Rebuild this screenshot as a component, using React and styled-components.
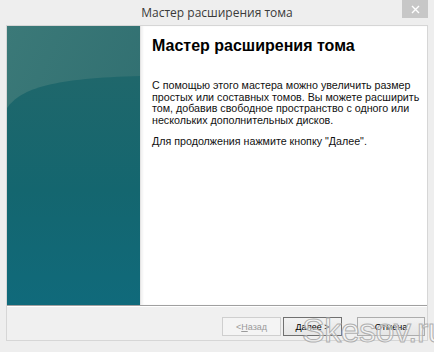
import React from 'react';
import styled, { createGlobalStyle } from 'styled-components';

const Global = createGlobalStyle`
	html, body {
		margin: 0;
		padding: 0;
		overflow: hidden;
		background: #efefef;
	}
`

const Window = styled.div`
	position: relative;
	width: 434px;
	height: 352px;
	display: flex;
	flex-direction: column;
	background-color: #eeeeee;
	box-sizing: border-box;
	overflow: hidden;
	font-family: "Liberation Sans", Arial, sans-serif;
`

const TitleBar = styled.div`
	height: 25px;
	display: grid;
	grid-template-columns: 1fr auto 1fr;
	align-items: start;
	.title {
		grid-column: 2;
		font-family: "Open Sans", "Noto Sans", sans-serif;
		font-size: 12px;
		line-height: 26px;
		color: #3a3a3a;
	}
`

const CloseButton = styled.div`
	grid-column: 3;
	justify-self: end;
	margin-right: 6px;
	width: 26px;
	height: 18px;
	background-color: #c7c7c7;
	color: #fff;
	display: flex;
	align-items: center;
	justify-content: center;
`

const Frame = styled.div`
	flex: 1;
	margin: 0 6px 11px 6px;
	border: 1px solid #d6d6d6;
	display: flex;
	flex-direction: column;
	background-color: #f0f0f0;
`

const Main = styled.div`
	height: 279px;
	display: flex;
`

const SidePanel = styled.div`
	width: 133px;
	height: 100%;
	svg {
		display: block;
	}
`

const Page = styled.div`
	flex: 1;
	min-width: 0;
	background-color: #fff;
	border-left: 1px solid #e3e3e3;
	box-shadow: inset 2px 0 2px rgba(0,0,0,0.05);
	padding: 10px 4px 0 11px;
	color: #111;
	h1 {
		margin: 0 0 24px 0;
		font-family: "Liberation Sans", Arial, sans-serif;
		font-weight: bold;
		font-size: 16px;
		line-height: 20px;
		color: #000;
	}
	p {
		margin: 0 0 9px 0;
		font-size: 10.7px;
		line-height: 11.7px;
		white-space: nowrap;
	}
`

const Separator = styled.div`
	border-top: 1px solid #a0a0a0;
	border-bottom: 1px solid #ffffff;
`

const ButtonBar = styled.div`
	flex: 1;
	display: flex;
	justify-content: flex-end;
	align-items: flex-start;
	padding: 10px 2px 0 0;
`

const Button = styled.div`
	box-sizing: border-box;
	width: ${p => p.w}px;
	height: 19px;
	margin-left: ${p => p.gap}px;
	display: flex;
	align-items: center;
	justify-content: center;
	font-size: 9px;
	border: 1px solid ${p => p.disabled ? '#cfcfcf' : p.primary ? '#707070' : '#adadad'};
	background: ${p => p.disabled ? '#f4f4f4' : 'linear-gradient(#f2f2f2, #e6e6e6)'};
	color: ${p => p.disabled ? '#9a9a9a' : '#000'};
	u {
		text-decoration: underline;
	}
`

const Watermark = styled.div`
	position: absolute;
	left: 302px;
	top: 311px;
	font-family: "Liberation Sans", Arial, sans-serif;
	font-size: 34px;
	letter-spacing: -0.5px;
	color: rgba(255,255,255,0.45);
	-webkit-text-stroke: 1px #b0b0b0;
	white-space: nowrap;
	pointer-events: none;
`

const TealArt = () => (
	<svg width="133" height="279" viewBox="0 0 133 279">
		<defs>
			<linearGradient id="top" x1="0" y1="0" x2="1" y2="1">
				<stop offset="0" stopColor="#3b7978" />
				<stop offset="1" stopColor="#2c6b6e" />
			</linearGradient>
			<linearGradient id="low" x1="0" y1="0" x2="0" y2="1">
				<stop offset="0" stopColor="#1f676b" />
				<stop offset="0.5" stopColor="#14666f" />
				<stop offset="1" stopColor="#106a7b" />
			</linearGradient>
		</defs>
		<rect width="133" height="279" fill="url(#top)" />
		<path d="M0,82 C14,62 48,52 133,50 L133,279 L0,279 Z" fill="url(#low)" />
	</svg>
)

const App = () => {
	return (
		<Window>
			<Global />
			<TitleBar>
				<div className="title">Мастер расширения тома</div>
				<CloseButton>
					<svg width="9" height="9" viewBox="0 0 9 9">
						<path d="M1,1 L8,8 M8,1 L1,8" stroke="#fff" strokeWidth="1.4" />
					</svg>
				</CloseButton>
			</TitleBar>
			<Frame>
				<Main>
					<SidePanel>
						<TealArt />
					</SidePanel>
					<Page>
						<h1>Мастер расширения тома</h1>
						<p>
							С помощью этого мастера можно увеличить размер<br />
							простых или составных томов. Вы можете расширить<br />
							том, добавив свободное пространство с одного или<br />
							нескольких дополнительных дисков.
						</p>
						<p>Для продолжения нажмите кнопку "Далее".</p>
					</Page>
				</Main>
				<Separator />
				<ButtonBar>
					<Button w={59} gap={0} disabled>&lt; <u>Н</u>азад</Button>
					<Button w={59} gap={2} primary><u>Д</u>алее &gt;</Button>
					<Button w={68} gap={15}>Отмена</Button>
				</ButtonBar>
			</Frame>
			<Watermark>Skesov.ru</Watermark>
		</Window>
	)
}

export default App;
